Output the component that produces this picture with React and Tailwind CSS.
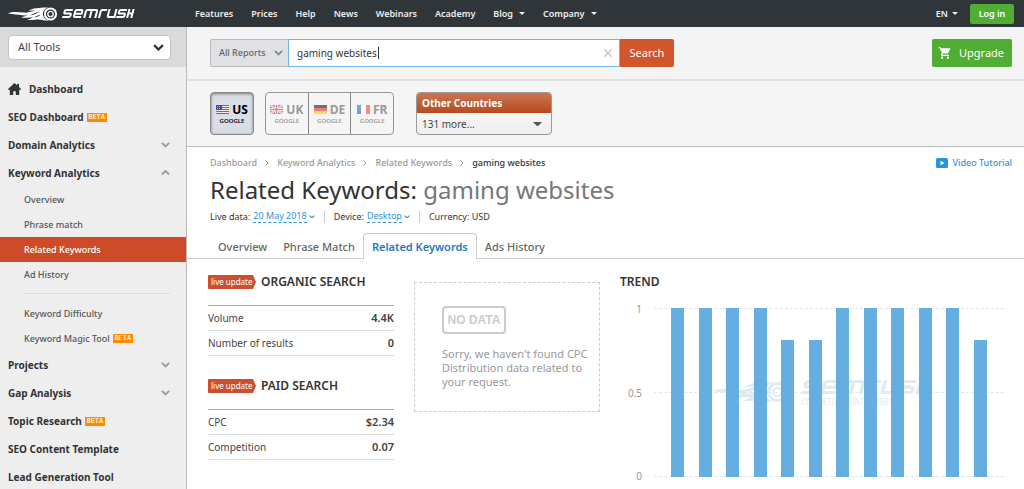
import React from "react";
import { MdShoppingCart } from "react-icons/md";

const NAV = [
  ["Features"], ["Prices"], ["Help"], ["News"], ["Webinars"], ["Academy"], ["Blog", true], ["Company", true],
];

function Comet({ className }) {
  return (
    <svg viewBox="0 0 50 14" className={className} fill="currentColor" aria-hidden="true">
      <path d="M0 6.200C5 4.200 10 5.200 16 5.600C21 5.900 24 4.600 27 3.600C24 3.400 22 3.800 20 4.600C23 1.800 27 1 31 1C34 .9 37 .4 40.500 .3C36.500 1.800 35 4.300 35 7C35 9.800 36.500 12.200 40.500 13.700C36 13.700 34 12.800 31 12.600C27 12.400 24 13.600 19 12.700C22 12.300 23.500 11.400 25 10.600C21 10 18 11.600 13 10.300C16 9.900 18 9 19.500 8.300C14 8.700 12 7.600 8 7.400C5 7.200 2 7 0 6.200ZM22 8.300C26 8.200 29 6.500 31.500 4.500C28.500 5 25 7.300 22 8.300ZM26.500 10.500C29 10.300 31 9.300 32.500 7.500C30.500 8 28 9.300 26.500 10.500Z" fillRule="evenodd" />
      <circle cx="42.500" cy="7" r="5.600" fill="none" stroke="currentColor" strokeWidth="2" />
      <circle cx="42.500" cy="7" r="2.700" fill="none" stroke="currentColor" strokeWidth="1.300" />
    </svg>
  );
}

function Wordmark({ className }) {
  return (
    <svg viewBox="0 0 79 10" preserveAspectRatio="none" className={className} fill="none" stroke="currentColor" strokeWidth="2.200" aria-hidden="true">
      <g transform="translate(2.500 0) skewX(-14)">
        <path d="M9.500 1.100H2.500Q1 1.100 1 2.500V3.500Q1 5 2.500 5H7Q8.500 5 8.500 6.500V7.500Q8.500 8.900 7 8.900H0" />
        <path d="M20.500 8.900H14Q12.500 8.900 12.500 7.500V2.500Q12.500 1.100 14 1.100H18.500Q20 1.100 20 2.500V5.200H12.500" />
        <path d="M24 10V2.500Q24 1.100 25.500 1.100H34.500Q36 1.100 36 2.500V10M30 1V10" />
        <path d="M40 10V2.500Q40 1.100 41.500 1.100H46.500" />
        <path d="M49 0V7.500Q49 8.900 50.500 8.900H56.500V0" />
        <path d="M68 1.100H61.500Q60 1.100 60 2.500V3.500Q60 5 61.500 5H65.500Q67 5 67 6.500V7.500Q67 8.900 65.500 8.900H58.500" />
        <path d="M70.500 0V10M70.500 5H75.500M75 0V10" />
      </g>
    </svg>
  );
}

function HomeIcon({ className }) {
  return (
    <svg viewBox="0 0 13 12" className={className} fill="currentColor" aria-hidden="true">
      <path d="M6.500 0L9 2.200V1H11V4L13 6V6.700H11.200V12H7.800V8.200H5.200V12H1.800V6.700H0V6Z" />
    </svg>
  );
}

function Chevron({ up, className }) {
  return (
    <svg viewBox="0 0 10 6" className={className} fill="none" stroke="currentColor" strokeWidth="2" aria-hidden="true">
      <path d={up ? "M1 5L5 1L9 5" : "M1 1L5 5L9 1"} />
    </svg>
  );
}

function Caret({ className }) {
  return (
    <svg viewBox="0 0 10 5" className={className} fill="currentColor" aria-hidden="true">
      <path d="M0 0H10L5 5Z" />
    </svg>
  );
}

function Beta() {
  return (
    <span className="ml-[3px] flex h-[9px] w-5 items-center justify-center bg-[#ff8a00] font-['Liberation_Mono',monospace] text-[7px] leading-none font-bold text-[#ffe9cf]">
      BETA
    </span>
  );
}

function Section({ label, chevron, beta, home }) {
  return (
    <a href="#" className="flex h-7 items-center pr-4 pl-2 text-[10px] font-bold text-[#333]">
      {home && <HomeIcon className="mr-2 h-3 w-[13px]" />}
      {label}
      {beta && <Beta />}
      {chevron && <Chevron up={chevron === "up"} className="ml-auto w-[9px] text-[#999]" />}
    </a>
  );
}

function SubItem({ label, active, beta }) {
  return (
    <a
      href="#"
      className={
        active
          ? "flex h-[25px] items-center bg-[#ce4b27] pl-6 text-[9px] font-medium text-white"
          : "flex h-[25px] items-center pl-6 text-[9px] font-medium text-[#555]"
      }
    >
      {label}
      {beta && <Beta />}
    </a>
  );
}

function Flag({ code }) {
  return (
    <svg viewBox="0 0 13 9" className="h-[9px] w-[13px]" aria-hidden="true">
      {code === "US" && (
        <>
          <path d="M0 0H13V9H0Z" fill="#f5e6e8" />
          <path d="M0 .5H13M0 2.500H13M0 4.500H13M0 6.500H13M0 8.500H13" stroke="#cf4a55" />
          <path d="M0 0H6V5H0Z" fill="#3f4d9b" />
          <path d="M1 1.500H5M1 3.500H5" stroke="#aab2dd" strokeDasharray="1 1" />
        </>
      )}
      {code === "UK" && (
        <>
          <path d="M0 0H13V9H0Z" fill="#8d93cf" />
          <path d="M0 0L13 9M13 0L0 9" stroke="#fff" strokeWidth="2" />
          <path d="M0 0L13 9M13 0L0 9" stroke="#ee8f98" strokeWidth=".8" />
          <path d="M6.500 0V9M0 4.500H13" stroke="#fff" strokeWidth="3" />
          <path d="M6.500 0V9M0 4.500H13" stroke="#ee7f89" strokeWidth="1.600" />
        </>
      )}
      {code === "DE" && (
        <>
          <path d="M0 0H13V3H0Z" fill="#707070" />
          <path d="M0 3H13V6H0Z" fill="#ea7d78" />
          <path d="M0 6H13V9H0Z" fill="#f8dc62" />
        </>
      )}
      {code === "FR" && (
        <>
          <path d="M0 0H4V9H0Z" fill="#7d9fd6" />
          <path d="M4 0H9V9H4Z" fill="#fff" />
          <path d="M9 0H13V9H9Z" fill="#f28b85" />
        </>
      )}
    </svg>
  );
}

function Country({ code, className }) {
  return (
    <button className={className}>
      <span className="flex items-center gap-[3px] text-[12px] leading-[14px] font-bold">
        <Flag code={code} />
        {code}
      </span>
      <span className="text-[6px] leading-[8px] font-semibold">GOOGLE</span>
    </button>
  );
}

function Stats({ title, rows }) {
  return (
    <section>
      <h2 className="flex h-4 items-center gap-1 text-[12px] font-semibold text-[#333]">
        <span className="relative mr-px flex h-[14px] w-12 items-center pl-[3px] text-[8px] font-normal text-white">
          <svg viewBox="0 0 48 14" className="absolute inset-0 size-full" aria-hidden="true">
            <path d="M1 0H45L48 7L45 14H1Q0 14 0 13V1Q0 0 1 0Z" fill="#c94f2f" />
          </svg>
          <span className="relative whitespace-nowrap">live update</span>
        </span>
        {title}
      </h2>
      <table className="mt-[15px] w-full border-t border-[#aaa] text-[10px] text-[#444]">
        <tbody>
          {rows.map(([k, v]) => (
            <tr key={k} className="h-[25px] border-b border-[#ddd]">
              <th scope="row" className="text-left font-normal">{k}</th>
              <td className="text-right text-[11px] font-semibold">{v}</td>
            </tr>
          ))}
        </tbody>
      </table>
    </section>
  );
}

const BARS = [1, 1, 1, 1, 0.81, 0.81, 1, 1, 1, 1, 1, 0.81];

function Trend() {
  return (
    <section className="min-w-0 flex-1">
      <h2 className="text-[12px] leading-4 font-semibold text-[#333]">TREND</h2>
      <div className="mt-[18px] mr-5 flex h-[169px] gap-3">
        <div className="flex w-[22px] flex-col justify-between text-right text-[10px] leading-none text-[#999]">
          <span className="-mt-1">1</span>
          <span>0.5</span>
          <span className="-mb-1">0</span>
        </div>
        <div className="relative flex flex-1 flex-col justify-between">
          <div className="border-t border-dashed border-[#dde8ec]" />
          <div className="border-t border-dashed border-[#dde8ec]" />
          <div className="border-t border-dashed border-[#dde8ec]" />
          <div className="absolute top-[72px] left-[58px] flex items-start gap-3 text-[#e0ebf0]">
            <Comet className="h-[24px] w-[77px]" />
            <div>
              <Wordmark className="h-[14px] w-[130px]" />
              <div className="mt-1 text-[8px] leading-none font-medium whitespace-nowrap italic">COMPETITIVE INTELLIGENCE</div>
            </div>
          </div>
          <div className="absolute inset-0 flex items-end justify-around px-[10px]">
            {BARS.map((v, i) => (
              <div key={i} className="w-[13px] bg-[#64aee1]" style={{ height: `${v * 100}%` }} />
            ))}
          </div>
        </div>
      </div>
    </section>
  );
}

export default function App() {
  return (
    <div className="min-h-screen bg-white font-['Noto_Sans',sans-serif] text-[#333]">
      <header className="flex h-[27px] items-center bg-[#30353a] pr-[10px] pl-2 text-[9px] font-semibold text-[#eee]">
        <a href="#" aria-label="SEMrush" className="flex w-[187px] items-center gap-1 text-white">
          <Comet className="h-[14px] w-[50px]" />
          <Wordmark className="h-[9px] w-[73px]" />
        </a>
        <nav className="flex gap-[18px]">
          {NAV.map(([label, menu]) => (
            <a key={label} href="#" className="flex items-center gap-[6px]">
              {label}
              {menu && <Caret className="w-[6px]" />}
            </a>
          ))}
        </nav>
        <button className="ml-auto flex items-center gap-1">
          EN <Caret className="w-[6px]" />
        </button>
        <button className="ml-3 h-5 w-11 rounded-xs bg-[#51ae34] text-white">Log in</button>
      </header>

      <div className="flex">
        <aside className="w-[187px] shrink-0 border-r border-[#bbb] bg-[#eee]">
          <div className="h-10 bg-[#dadada] px-2 pt-2">
            <button className="flex h-[25px] w-full max-w-[163px] items-center justify-between rounded-sm border border-[#bcc5c8] bg-white pr-[6px] pl-[9px] text-[11px] text-[#444]">
              All Tools
              <Chevron className="w-[11px] text-[#333]" />
            </button>
          </div>
          <nav className="pt-2">
            <Section label="Dashboard" home />
            <Section label="SEO Dashboard" beta />
            <Section label="Domain Analytics" chevron="down" />
            <Section label="Keyword Analytics" chevron="up" />
            <SubItem label="Overview" />
            <SubItem label="Phrase match" />
            <SubItem label="Related Keywords" active />
            <SubItem label="Ad History" />
            <hr className="mt-[6px] mr-4 mb-[7px] ml-6 border-[#ddd]" />
            <SubItem label="Keyword Difficulty" />
            <SubItem label="Keyword Magic Tool" beta />
            <Section label="Projects" chevron="down" />
            <Section label="Gap Analysis" chevron="down" />
            <Section label="Topic Research" beta />
            <Section label="SEO Content Template" />
            <Section label="Lead Generation Tool" />
          </nav>
        </aside>

        <main className="min-w-0 flex-1">
          <div className="flex h-[54px] items-center border-b-2 border-[#e0e0e0] bg-[#f4f4f4] pr-3 pl-[23px]">
            <button className="flex h-7 w-[78px] items-center justify-between rounded-l-xs border border-r-0 border-[#b8bcc0] bg-[#dfe1e5] pr-[5px] pl-2 text-[9px] font-medium text-[#666]">
              All Reports
              <Chevron className="w-[9px] text-[#888]" />
            </button>
            <div className="relative w-[332px]">
              <input
                aria-label="Search query"
                defaultValue="gaming websites"
                className="block h-7 w-full border border-[#75b5e5] bg-white px-2 text-[10px] text-[#333] outline-none"
              />
              <span className="absolute top-2 left-[90px] h-3 w-px bg-[#333]" />
              <button aria-label="Clear" className="absolute top-[10px] right-2 text-[#bbb]">
                <svg viewBox="0 0 8 8" className="size-2" stroke="currentColor" strokeWidth="1.200">
                  <path d="M0 0L8 8M8 0L0 8" />
                </svg>
              </button>
            </div>
            <button className="h-7 w-[54px] rounded-r-xs bg-[#d2562b] text-[11px] text-white">Search</button>
            <button className="ml-auto flex h-7 w-20 items-center gap-[7px] rounded-xs bg-[#51ae34] pl-[6px] text-[11px] text-white">
              <MdShoppingCart className="size-[14px]" />
              Upgrade
            </button>
          </div>

          <div className="flex h-[66px] items-start border-b border-[#bbb] bg-[#f5f5f5] pt-[11px] pl-[23px]">
            <Country code="US" className="flex h-[43px] w-[44px] flex-col items-center justify-center rounded-sm border border-[#888] bg-[#d9dde5] text-black shadow-[inset_0_1px_3px_#777]" />
            <div className="ml-[11px] flex h-[43px] w-[129px] divide-x divide-[#888] rounded-sm border border-[#999] text-[#999]">
              <Country code="UK" className="flex flex-1 flex-col items-center justify-center" />
              <Country code="DE" className="flex flex-1 flex-col items-center justify-center" />
              <Country code="FR" className="flex flex-1 flex-col items-center justify-center" />
            </div>
            <button className="ml-[22px] h-[43px] w-[136px] overflow-hidden rounded-sm border border-[#999] bg-linear-to-b from-white to-[#eee] text-left">
              <span className="flex h-5 items-center bg-linear-to-b from-[#cb7550] to-[#b64a1c] pl-[5px] text-[10px] font-bold text-white">
                Other Countries
              </span>
              <span className="flex h-[22px] items-center justify-between pr-[9px] pl-[5px] text-[10px] text-[#444]">
                131 more... <Caret className="w-[9px] text-[#555]" />
              </span>
            </button>
          </div>

          <div className="pl-[23px]">
            <div className="flex items-center justify-between pt-[9px] pr-3 text-[9px] leading-[14px] font-medium">
              <nav aria-label="Breadcrumb" className="flex items-center gap-2 text-[#999]">
                {["Dashboard", "Keyword Analytics", "Related Keywords"].map((c) => (
                  <React.Fragment key={c}>
                    <a href="#">{c}</a>
                    <svg viewBox="0 0 4 6" className="h-[6px] w-1" fill="none" stroke="currentColor">
                      <path d="M.5 .5L3 3L.5 5.500" />
                    </svg>
                  </React.Fragment>
                ))}
                <span className="text-[#333]">gaming websites</span>
              </nav>
              <a href="#" className="flex items-center gap-1 text-[#2f93dd]">
                <svg viewBox="0 0 12 10" className="h-[10px] w-3">
                  <rect width="12" height="10" rx="1.500" fill="#2b94e1" />
                  <path d="M4.500 2.800L8.500 5L4.500 7.200Z" fill="#fff" />
                </svg>
                Video Tutorial
              </a>
            </div>
            <h1 className="mt-1 text-[24px] leading-8 text-[#333]">
              Related Keywords: <span className="text-[#777]">gaming websites</span>
            </h1>
            <div className="mt-1 flex items-center text-[9px] leading-3">
              <span>Live data:</span>
              <button className="ml-[3px] border-b border-dashed border-[#2f93dd] text-[#2f93dd]">20 May 2018</button>
              <Chevron className="ml-[2px] w-[6px] text-[#2f93dd]" />
              <span className="ml-[9px] border-l border-[#ccc] pl-[9px]">Device:</span>
              <button className="ml-[3px] border-b border-dashed border-[#2f93dd] text-[#2f93dd]">Desktop</button>
              <Chevron className="ml-[2px] w-[6px] text-[#2f93dd]" />
              <span className="ml-[9px] border-l border-[#ccc] pl-[9px]">Currency: USD</span>
            </div>
          </div>

          <nav className="mt-[10px] flex h-[26px] items-stretch border-b border-[#ccc] pl-[23px] text-[11px] font-medium text-[#666]">
            <a href="#" className="flex items-center px-2 pt-[3px]">Overview</a>
            <a href="#" className="flex items-center px-2 pt-[3px]">Phrase Match</a>
            <a href="#" className="-mb-px flex items-center rounded-t-sm border border-b-0 border-[#ccc] bg-white px-2 pt-[2px] font-semibold text-[#1b78c2]">
              Related Keywords
            </a>
            <a href="#" className="flex items-center px-2 pt-[3px]">Ads History</a>
          </nav>

          <div className="flex items-start pt-[15px] pl-[21px]">
            <div className="flex w-[186px] flex-col gap-[22px]">
              <Stats title="ORGANIC SEARCH" rows={[["Volume", "4.4K"], ["Number of results", "0"]]} />
              <Stats title="PAID SEARCH" rows={[["CPC", "$2.34"], ["Competition", "0.07"]]} />
            </div>
            <div className="mt-2 ml-5 h-[130px] w-[186px] border border-dashed border-[#ccc] pt-[23px] pl-[27px] text-[#999]">
              <div className="flex h-7 w-16 items-center justify-center rounded-sm border-2 border-[#ccc] font-['Liberation_Sans',sans-serif] text-[12px] leading-none font-bold whitespace-nowrap text-[#ccc]">
                NO DATA
              </div>
              <p className="mt-[13px] w-[152px] text-[11px] leading-[14px]">Sorry, we haven't found CPC Distribution data related to your request.</p>
            </div>
            <div className="ml-5 flex min-w-0 flex-1">
              <Trend />
            </div>
          </div>
        </main>
      </div>
    </div>
  );
}
